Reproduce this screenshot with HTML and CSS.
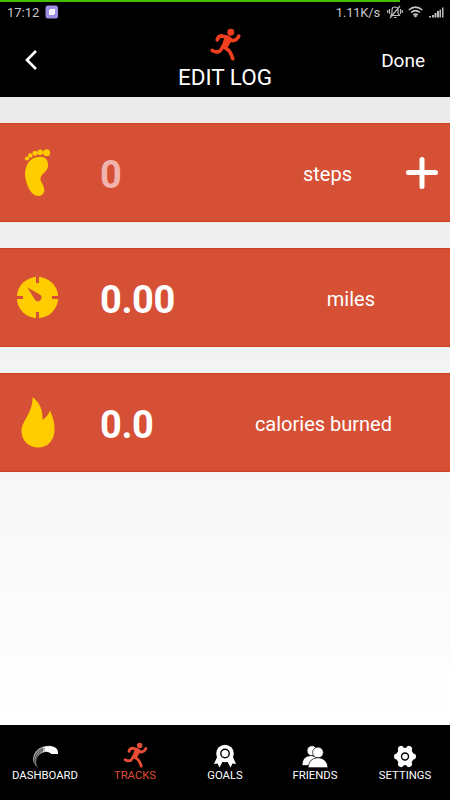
FILE: index.html
```
<!DOCTYPE html>
<html lang="en">
<head>
    <meta charset="utf-8">
    <title>Edit Log</title>
    <link rel="stylesheet" href="styles.css">
</head>
<body>
    <svg width="0" height="0" class="defs">
        <symbol id="runner" viewBox="30 24 92 100">
            <circle cx="92" cy="37" r="10.500"/>
            <path d="M67 46L84 47Q93 51 97 58L82 84L64 80L72 55Z"/>
            <path class="limb" d="M51 60Q54 48 65 48L82 53L94 62Q109 64 116 49M84 58L70 80L86 92Q92 98 98 117M69 78Q60 95 55 96Q46 98 36 92"/>
        </symbol>
    </svg>
    <div class="progress"></div>
    <header>
        <div class="status">
            <span>17:12</span>
            <svg class="app" width="14" height="14" viewBox="0 0 14 14"><rect x=".5" y=".5" width="12.5" height="13" rx="2.5" fill="#9f8de6"/><rect x="5" y="4" width="5" height="5" fill="#fff"/><rect x="4" y="5" width="5" height="5" fill="#f3f0ff"/></svg>
            <span class="speed">1.11K/s</span>
            <svg width="16" height="14" viewBox="0 0 16 14" fill="none" stroke="#bbb" stroke-width="1.2"><path d="M4 10.5L5 8V5Q5 2 8 2Q11 2 11 5V8L12.500 10.500ZM7 12.500H9.500M2.500 4V9M.7 5V8M13.500 4V9M15.300 5V8M3 13L13 1"/></svg>
            <svg class="wifi" width="15" height="12" viewBox="0 0 15 12" fill="none" stroke="#c8c8c8" stroke-width="1.500"><path d="M.7 4Q7.500 -1.700 14.300 4M3 6.500Q7.500 2.700 12 6.500M5.200 8.800Q7.500 7 9.800 8.800"/><circle cx="7.500" cy="10" r=".6"/></svg>
            <svg width="15" height="11" viewBox="0 0 15 11" fill="#bbb"><path d="M0 9h2v1.500H0zM3 8h2v2.500H3zM5.500 6h2v4.500h-2zM8 4h2v6.500H8zM10.500 2.500h1.500v8h-1.500zM13 0.500h1.500v10H13z"/></svg>
        </div>
        <div class="titlebar">
            <svg class="back" width="14" height="22" viewBox="0 0 14 22"><path d="M12 2L3 11L12 20" fill="none" stroke="#fff" stroke-width="2.700"/></svg>
            <div class="title">
                <svg class="runner" width="31" height="33"><use href="#runner"/></svg>
                <h1>EDIT LOG</h1>
            </div>
            <div class="done">Done</div>
        </div>
    </header>
    <main>
        <div class="row steps">
            <svg class="icon" width="42" height="50" viewBox="0 0 42 50">
                <path d="M22 9C28 8 31.500 12 31 18C31 24 22.500 26 23.500 32C25 36 28.500 40 27 44C25 50 18 48.500 15 45C10 39 8 31 8 25C9 15 14 9 22 9Z"/>
                <circle cx="10" cy="10.500" r="2.100"/><circle cx="13.300" cy="7.500" r="2.300"/><circle cx="18" cy="5.300" r="2.500"/><circle cx="23.200" cy="4.300" r="2.800"/><circle cx="29.600" cy="4.800" r="3.500"/>
            </svg>
            <span class="value empty">0</span>
            <span class="unit">steps</span>
            <svg class="plus" width="32" height="32" viewBox="0 0 32 32"><path d="M2.500 15.500H29.500M16 2.500V29.500" stroke="#fff" stroke-width="5" stroke-linecap="round"/></svg>
        </div>
        <div class="row miles">
            <svg class="icon" width="42" height="50" viewBox="0 0 42 50">
                <circle cx="20.500" cy="24.500" r="20.700"/>
                <path fill="#d65036" d="M19 3.500h3V10h-3zM19 39h3v6.500h-3zM-1 23h7v3H-1zM35 23h7v3h-7zM10.500 14.500L23.500 22A3.500 3.500 0 1 1 18 27Z"/>
            </svg>
            <span class="value">0.00</span>
            <span class="unit">miles</span>
        </div>
        <div class="row calories">
            <svg class="icon" width="42" height="50" viewBox="0 0 42 50">
                <path d="M15.500-1C23 5 26 12 25.500 22Q31 18 33 12.500C36 19 38 26 37.500 33C37 43 30 49.500 21.500 49.500C12 49.500 4.500 43 4.500 33C4.500 23 16 15 15.500-1Z"/>
            </svg>
            <span class="value">0.0</span>
            <span class="unit">calories burned</span>
        </div>
    </main>
    <nav>
        <div class="tab">
            <svg width="28" height="26" viewBox="0 0 28 26">
                <path d="M7 25.500C2 22 1 17 3 12.500C7 4 18 2 24 5.500Q27 8 27 12H20.500C15 8 9 11 6.500 15C4.500 19 5 22 7 25.500Z" fill="#999"/>
                <path d="M12 5.500C17 3 25 4 26.500 8L27 12H20.500C18 9.500 15 9 12 10Z" fill="#fff"/>
                <path d="M14 6.500C7 7 2 14 4 22M14 8C8 8.500 3.500 15 5.500 24" fill="none" stroke="#000" stroke-width=".5"/>
            </svg>
            <span>DASHBOARD</span>
        </div>
        <div class="tab active">
            <svg class="runner" width="25" height="26"><use href="#runner"/></svg>
            <span>TRACKS</span>
        </div>
        <div class="tab">
            <svg width="24" height="26" viewBox="0 0 24 26" fill="#fff">
                <path d="M5 13L1 22L4.500 21.500L6.500 25.500L10.500 18H13.500L17.500 25.500L19.500 21.500L23 22L19 13Z"/>
                <circle cx="12" cy="11.500" r="8.800"/>
                <circle cx="12" cy="11.500" r="4.200" stroke="#000" stroke-width="1.400"/>
            </svg>
            <span>GOALS</span>
        </div>
        <div class="tab">
            <svg width="26" height="26" viewBox="0 0 26 26" fill="#fff" stroke="#000" stroke-width=".7">
                <circle cx="10" cy="8.700" r="5"/><path d="M0 23.500Q0 14 9 13.500Q17 14 18 23.500Z"/>
                <circle cx="16" cy="10.500" r="5.400"/><path d="M6 25.700Q7 16 16 15.700Q25 16 26 25.700Z"/>
            </svg>
            <span>FRIENDS</span>
        </div>
        <div class="tab">
            <svg width="24" height="26" viewBox="0 0 24 26">
                <g stroke="#fff" stroke-width="6" stroke-linecap="round"><path d="M8 7L16 22M16 7L8 22M4 14.500H20"/></g>
                <circle cx="12" cy="14.500" r="8.800" fill="#fff"/>
                <circle cx="12" cy="14.500" r="3.500" fill="#fff" stroke="#000" stroke-width="1.400"/>
            </svg>
            <span>SETTINGS</span>
        </div>
    </nav>
</body>
</html>
```

FILE: styles.css
```
body {
    margin: 0;
    height: 800px;
    display: flex;
    flex-direction: column;
    overflow: hidden;
    background: #000;
    color: #fff;
    font-family: Roboto, sans-serif;
}
.defs {
    position: absolute;
}
.progress {
    width: 400px;
    height: 2px;
    background: #43bd00;
}
header {
    height: 95px;
}
.status {
    display: flex;
    align-items: center;
    height: 20px;
    padding: 0 6px 0 7px;
    color: #c6c6c6;
    font-size: 13px;
}
.app {
    margin-left: 6px;
}
.speed {
    margin-left: auto;
    margin-right: 7px;
    letter-spacing: -0.2px;
}
.wifi {
    margin: 0 6px 0 5px;
}
.titlebar {
    display: grid;
    grid-template-columns: 110px 1fr 110px;
    height: 75px;
}
.back {
    margin: 27px 0 0 24px;
}
.title {
    display: flex;
    flex-direction: column;
    align-items: center;
    padding-top: 6px;
}
.runner {
    fill: #f33f20;
    stroke: #f33f20;
    stroke-width: 0;
}
.limb {
    fill: none;
    stroke-width: 11px;
    stroke-linecap: round;
    stroke-linejoin: round;
}
h1 {
    margin: 3px 0 0;
    font-size: 22.5px;
    line-height: 26px;
    font-weight: normal;
}
.done {
    margin: 27px 25px 0 0;
    text-align: right;
    font-size: 19px;
    line-height: 24px;
}
main {
    flex: 1;
    display: flex;
    flex-direction: column;
    gap: 26px;
    padding-top: 26px;
    background: linear-gradient(#ebebeb, #fff);
}
.row {
    box-sizing: border-box;
    display: flex;
    align-items: center;
    height: 99px;
    padding-left: 17px;
    background: #d65036;
    border-top: 1px solid #d0401f;
    border-bottom: 1px solid #d0401f;
}
.icon {
    fill: #fc0;
    overflow: visible;
}
.value {
    margin-left: 41px;
    padding-top: 5px;
    font-size: 38px;
    font-weight: bold;
    letter-spacing: -0.4px;
}
.empty {
    color: #f0b4ac;
}
.unit {
    margin-left: auto;
    padding-top: 2px;
    font-size: 20px;
}
.plus {
    margin: 0 12px 0 54px;
}
.miles .unit {
    margin-right: 75px;
}
.calories .unit {
    margin-right: 58px;
}
nav {
    display: grid;
    grid-template-columns: repeat(5, 1fr);
    height: 75px;
    background: #000;
}
.tab {
    display: flex;
    flex-direction: column;
    align-items: center;
    padding-top: 17px;
    font-size: 11.3px;
    line-height: 14px;
}
.tab span {
    margin-top: 1px;
}
.active {
    color: #df4b34;
}
.active .runner {
    fill: #e74c35;
    stroke: #e74c35;
}
```
